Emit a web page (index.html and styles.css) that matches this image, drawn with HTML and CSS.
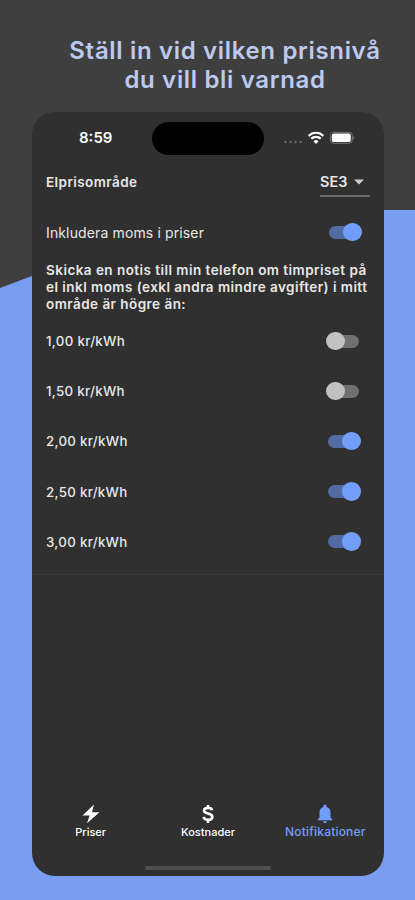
FILE: index.html
```html
<!DOCTYPE html>
<html lang="sv">
<head>
<meta charset="utf-8">
<title>Notifikationer</title>
<link rel="stylesheet" href="styles.css">
</head>
<body>
<main class="promo">
  <h1 class="headline">Ställ in vid vilken prisnivå<br>du vill bli varnad</h1>
  <section class="phone">
    <header class="status">
      <span class="time">8:59</span>
      <span class="island"></span>
      <span class="indicators">
        <svg width="72" height="16" viewBox="0 0 72 16">
          <g fill="#6c6c6c"><circle cx="2.5" cy="11" r="1.2"/><circle cx="7.5" cy="11" r="1.2"/><circle cx="12.5" cy="11" r="1.2"/><circle cx="17.5" cy="11" r="1.2"/></g>
          <g fill="none" stroke="#fff" stroke-width="2.2"><path d="M25.6 4.9a10.3 10.3 0 0 1 14.800 0"/><path d="M28.300 7.800a6.600 6.600 0 0 1 9.400 0"/></g>
          <path d="M33 13l-2.500-2.700a3.500 3.500 0 0 1 5 0z" fill="#fff"/>
          <rect x="47.300" y="1.300" width="22" height="11" rx="3.400" fill="none" stroke="#777"/>
          <rect x="48.800" y="2.500" width="19" height="8.600" rx="2.200" fill="#fff"/>
          <path d="M70.300 5q2 1.800 0 3.600z" fill="#888"/>
        </svg>
      </span>
    </header>
    <div class="area">
      <span class="area-label">Elprisområde</span>
      <span class="select"><span>SE3</span><svg width="10" height="6" viewBox="0 0 10 6"><path d="M0 .5h10L5 5.500z" fill="#ccc"/></svg></span>
    </div>
    <div class="row vat"><span class="vat-label">Inkludera moms i priser</span><i class="switch on"></i></div>
    <p class="note">Skicka en notis till min telefon om timpriset på<br>el inkl moms (exkl andra mindre avgifter) i mitt<br>område är högre än:</p>
    <div class="levels">
      <div class="row"><span>1,00 kr/kWh</span><i class="switch"></i></div>
      <div class="row"><span>1,50 kr/kWh</span><i class="switch"></i></div>
      <div class="row"><span>2,00 kr/kWh</span><i class="switch on"></i></div>
      <div class="row"><span>2,50 kr/kWh</span><i class="switch on"></i></div>
      <div class="row"><span>3,00 kr/kWh</span><i class="switch on"></i></div>
    </div>
    <nav class="tabs">
      <a class="tab"><svg width="18" height="20" viewBox="0 0 18 20"><path d="M12 .5L.5 11.500h7.200L5 19.200 17.500 8.200h-7.500z" fill="#fff"/></svg><span>Priser</span></a>
      <a class="tab"><svg width="12" height="20" viewBox="0 0 12 20"><path d="M10 6.300C9.700 4.600 8.200 3.900 6 3.900c-2.500 0-4 1-4 2.700 0 4 8.300 1.800 8.300 6.200 0 2-1.700 3.100-4.200 3.100-2.600 0-4.200-1.100-4.500-3M6 1v3M6 15.500V19" fill="none" stroke="#fff" stroke-width="2.600"/></svg><span>Kostnader</span></a>
      <a class="tab active"><svg width="16" height="20" viewBox="0 0 16 20"><path d="M6.500 3V2a1.500 1.500 0 0 1 3 0v1c2.700.7 4 2.800 4 5.400v5.100l1.900 1.900v.9H.6v-.9l1.900-1.900V8.400C2.500 5.800 3.800 3.700 6.500 3zM6 17.200h4a2 2 0 0 1-4 0z" fill="#729efb"/></svg><span>Notifikationer</span></a>
    </nav>
    <div class="home"></div>
  </section>
</main>
</body>
</html>
```
FILE: styles.css
```css
* { box-sizing: border-box; }
body { margin: 0; font-family: Inter, "Liberation Sans", sans-serif; }
.promo {
  width: 415px;
  height: 900px;
  padding-top: 36px;
  overflow: hidden;
  background: #799ef1;
  position: relative;
  z-index: 0;
}
.promo::before {
  content: "";
  position: absolute;
  z-index: -1;
  inset: 0 0 auto;
  height: 290px;
  background: #3f3f3f;
  clip-path: polygon(0 0, 100% 0, 100% 210px, 208px 210px, 0 288px);
}
.headline {
  width: 330px;
  height: 76px;
  margin: 0 0 0 60px;
  text-align: center;
  white-space: nowrap;
  font-size: 24px;
  line-height: 29px;
  letter-spacing: .67px;
  font-weight: 600;
  color: #bdcaf0;
}
.phone {
  width: 352px;
  height: 764px;
  margin-left: 32px;
  border-radius: 23px;
  background: #303030;
  color: #e8e8e8;
  display: flex;
  flex-direction: column;
  white-space: nowrap;
}
.status { height: 50px; display: flex; padding: 10px 26px 0 47px; }
.time { width: 73px; font-size: 15px; font-weight: 600; line-height: 32px; color: #fff; }
.island { width: 112px; height: 33px; border-radius: 17px; background: #000; }
.indicators { margin-left: 19px; padding-top: 9px; }
.indicators svg { display: block; }
.area { height: 45px; padding: 0 14px; display: flex; justify-content: space-between; }
.area-label { font-size: 13.5px; letter-spacing: .42px; font-weight: 600; line-height: 41px; }
.select { width: 50px; height: 35px; display: flex; gap: 7px; align-items: center; padding-top: 6px; border-bottom: 2px solid #6c6c6c; font-size: 14.5px; font-weight: 600; }
.row { height: 50.2px; display: flex; align-items: center; justify-content: space-between; padding: 0 22px 0 14px; font-size: 13.3px; font-weight: 500; letter-spacing: .3px; }
.vat { height: 50px; }
.vat-label { font-weight: 400; font-size: 14px; letter-spacing: .13px; }
.note { margin: 5px 0 3px; padding-left: 14px; font-size: 13.5px; line-height: 17px; font-weight: 600; letter-spacing: .46px; height: 51px; }
.levels { height: 259px; border-bottom: 1px solid #383838; }
.levels .row { padding: 0 23px 0 14px; }
.switch { width: 33px; height: 19px; position: relative; }
.switch::before { content: ""; position: absolute; left: 3px; top: 3px; width: 28px; height: 13px; border-radius: 7px; background: #707070; }
.switch::after { content: ""; position: absolute; left: -2px; top: 0; width: 18.500px; height: 18.500px; border-radius: 50%; background: #c1c1c1; }
.switch.on::before { left: 0; background: #526ca3; }
.switch.on::after { left: 14px; background: #729efb; }
.tabs { margin-top: 229px; height: 52px; display: grid; grid-template-columns: repeat(3, 1fr); }
.tab { display: flex; flex-direction: column; align-items: center; font-size: 11px; font-weight: 500; line-height: 16px; color: #fff; }
.active { color: #729efb; font-size: 12px; letter-spacing: .2px; }
.home { width: 126px; height: 4px; border-radius: 2px; margin: 10px auto 0 113px; background: #4f4f4f; }
```
